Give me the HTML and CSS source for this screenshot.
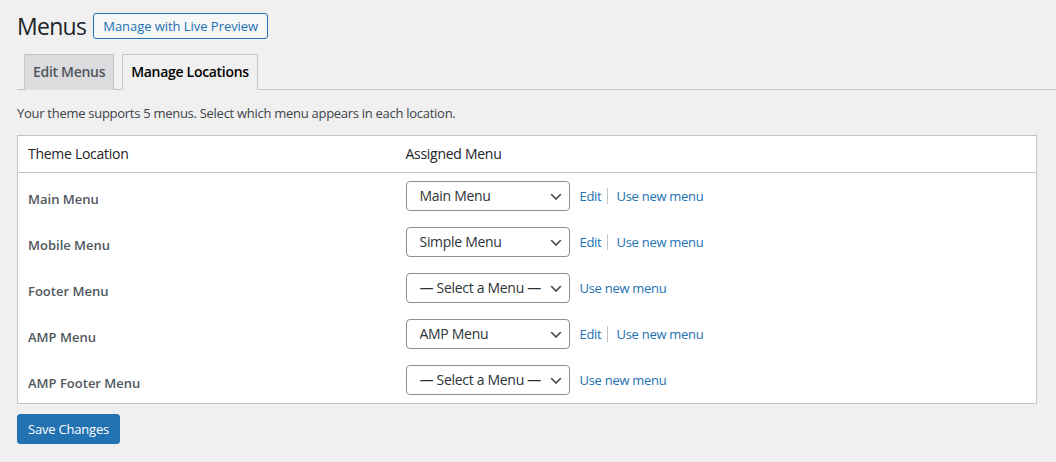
FILE: index.html
```html
<!DOCTYPE html>
<html lang="en">
<head>
<meta charset="utf-8">
<title>Menus</title>
<link rel="stylesheet" href="styles.css">
</head>
<body>
<div class="wrap">
  <div class="heading">
    <h1 class="page-title">Menus</h1>
    <a class="page-title-action" href="#">Manage with Live Preview</a>
  </div>

  <nav class="nav-tabs">
    <a class="nav-tab" href="#">Edit Menus</a>
    <a class="nav-tab nav-tab-active" href="#">Manage Locations</a>
  </nav>

  <p class="intro">Your theme supports 5 menus. Select which menu appears in each location.</p>

  <table class="locations">
    <colgroup><col class="col-loc"><col></colgroup>
    <thead>
      <tr><th>Theme Location</th><th>Assigned Menu</th></tr>
    </thead>
    <tbody>
      <tr>
        <td class="loc-title"><label>Main Menu</label></td>
        <td>
          <div class="menu-cell">
            <select class="menu-select"><option>Main Menu</option></select>
            <span class="row-links"><a class="edit-link" href="#">Edit</a><a href="#">Use new menu</a></span>
          </div>
        </td>
      </tr>
      <tr>
        <td class="loc-title"><label>Mobile Menu</label></td>
        <td>
          <div class="menu-cell">
            <select class="menu-select"><option>Simple Menu</option></select>
            <span class="row-links"><a class="edit-link" href="#">Edit</a><a href="#">Use new menu</a></span>
          </div>
        </td>
      </tr>
      <tr>
        <td class="loc-title"><label>Footer Menu</label></td>
        <td>
          <div class="menu-cell">
            <select class="menu-select"><option>— Select a Menu —</option></select>
            <span class="row-links"><a href="#">Use new menu</a></span>
          </div>
        </td>
      </tr>
      <tr>
        <td class="loc-title"><label>AMP Menu</label></td>
        <td>
          <div class="menu-cell">
            <select class="menu-select"><option>AMP Menu</option></select>
            <span class="row-links"><a class="edit-link" href="#">Edit</a><a href="#">Use new menu</a></span>
          </div>
        </td>
      </tr>
      <tr>
        <td class="loc-title"><label>AMP Footer Menu</label></td>
        <td>
          <div class="menu-cell">
            <select class="menu-select"><option>— Select a Menu —</option></select>
            <span class="row-links"><a href="#">Use new menu</a></span>
          </div>
        </td>
      </tr>
    </tbody>
  </table>

  <div class="submit">
    <button class="button-primary" type="button">Save Changes</button>
  </div>
</div>
</body>
</html>
```

FILE: styles.css
```css
* { box-sizing: border-box; }

html, body {
  margin: 0;
  padding: 0;
  background: #f0f0f1;
}

body {
  font-family: "Open Sans", "Noto Sans", sans-serif;
  font-size: 13px;
  letter-spacing: -0.28px;
  color: #3c434a;
  width: 1056px;
  height: 462px;
  overflow: hidden;
}

.wrap {
  padding: 0 0 0 17px;
}

.heading {
  display: flex;
  align-items: center;
  gap: 7px;
  height: 54px;
  padding-bottom: 2px;
}

.page-title {
  margin: 0;
  font-size: 23px;
  font-weight: 400;
  line-height: 30px;
  letter-spacing: -0.7px;
  color: #1d2327;
}

.page-title-action {
  display: inline-block;
  height: 26px;
  padding: 0 9px;
  border: 1px solid #2271b1;
  border-radius: 3px;
  background: #f6f7f7;
  color: #2271b1;
  font-size: 13px;
  font-weight: 500;
  line-height: 24px;
  letter-spacing: -0.05px;
  text-decoration: none;
}

.nav-tabs {
  display: flex;
  gap: 8px;
  padding-left: 7px;
  border-bottom: 1px solid #c3c4c7;
  height: 36px;
}

.nav-tab {
  display: block;
  height: 36px;
  padding: 5px 8px;
  border: 1px solid #c3c4c7;
  border-bottom: 0;
  background: #dcdcde;
  color: #50575e;
  font-size: 14px;
  font-weight: 600;
  line-height: 24px;
  letter-spacing: -0.3px;
  text-decoration: none;
}

.nav-tab-active {
  background: #f0f0f1;
  color: #000;
  height: 36px;
  position: relative;
  z-index: 1;
  border-bottom: 1px solid #f0f0f1;
}

.intro {
  margin: 13px 0 12px;
  line-height: 20px;
  color: #3c434a;
}

.locations {
  width: 1020px;
  border: 1px solid #c3c4c7;
  border-collapse: collapse;
  background: #fff;
  table-layout: fixed;
}

.col-loc { width: 378px; }

.locations th {
  text-align: left;
  font-weight: 400;
  font-size: 14px;
  color: #1d2327;
  padding: 8px 10px;
  line-height: 20px;
  border-bottom: 1px solid #c3c4c7;
}

.locations td {
  padding: 8px 10px;
  height: 46px;
  vertical-align: middle;
}

.loc-title label {
  display: block;
  padding-top: 5px;
  font-weight: 600;
  color: #50575e;
  font-size: 13px;
  letter-spacing: 0;
}

.menu-cell {
  display: flex;
  align-items: center;
}

.menu-select {
  appearance: none;
  -webkit-appearance: none;
  width: 164px;
  height: 30px;
  margin: 0;
  padding: 0 24px 0 13px;
  border: 1px solid #8c8f94;
  border-radius: 4px;
  background: #fff url("data:image/svg+xml,%3Csvg xmlns='http://www.w3.org/2000/svg' width='20' height='20' viewBox='0 0 20 20'%3E%3Cpath d='M5 6l5 5 5-5 2 1-7 7-7-7 2-1z' fill='%23555'/%3E%3C/svg%3E") no-repeat right 5px top 55%;
  background-size: 16px 16px;
  color: #2c3338;
  font-family: inherit;
  font-size: 14px;
  letter-spacing: -0.3px;
  line-height: 28px;
}

.row-links {
  display: flex;
  align-items: center;
  margin-left: 10px;
  line-height: 16px;
}

.row-links a {
  color: #2271b1;
  text-decoration: none;
  font-size: 13px;
}

.edit-link {
  padding-right: 6px;
  margin-right: 8px;
  border-right: 1px solid #c3c4c7;
}

.submit {
  padding-top: 10px;
}

.button-primary {
  height: 30px;
  padding: 0 10px;
  border: 1px solid #2271b1;
  border-radius: 3px;
  background: #2271b1;
  color: #fff;
  font-family: inherit;
  font-size: 13px;
  letter-spacing: -0.2px;
  line-height: 28px;
  cursor: pointer;
}
```
